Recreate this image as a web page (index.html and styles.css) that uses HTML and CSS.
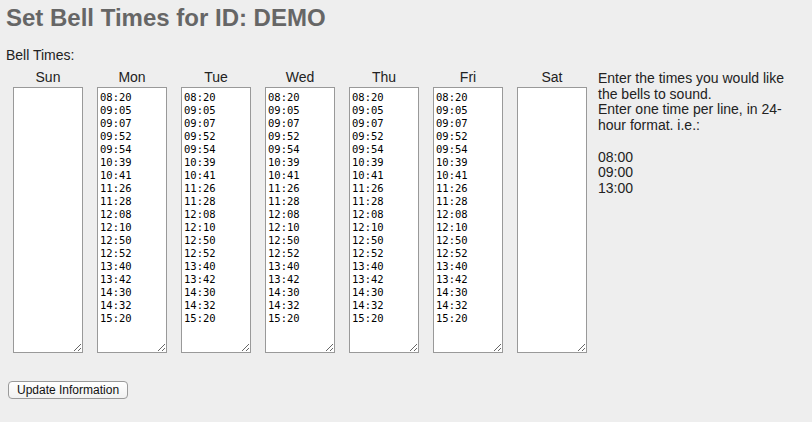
FILE: index.html
```html
<!DOCTYPE html>
<html lang="en">
<head>
    <meta charset="UTF-8">
    <title>Set Bell Times</title>
    <link rel="stylesheet" href="styles.css">
</head>
<body>
    <h1 class="page-title">Set Bell Times for ID: DEMO</h1>

    <form class="bell-form" onsubmit="return false;">
        <div class="field-label">Bell Times:</div>

        <div class="week">
            <div class="days">
                <div class="day">
                    <div class="day-name">Sun</div>
                    <textarea class="times" name="sun"></textarea>
                </div>
                <div class="day">
                    <div class="day-name">Mon</div>
                    <textarea class="times" name="mon">08:20
09:05
09:07
09:52
09:54
10:39
10:41
11:26
11:28
12:08
12:10
12:50
12:52
13:40
13:42
14:30
14:32
15:20</textarea>
                </div>
                <div class="day">
                    <div class="day-name">Tue</div>
                    <textarea class="times" name="tue">08:20
09:05
09:07
09:52
09:54
10:39
10:41
11:26
11:28
12:08
12:10
12:50
12:52
13:40
13:42
14:30
14:32
15:20</textarea>
                </div>
                <div class="day">
                    <div class="day-name">Wed</div>
                    <textarea class="times" name="wed">08:20
09:05
09:07
09:52
09:54
10:39
10:41
11:26
11:28
12:08
12:10
12:50
12:52
13:40
13:42
14:30
14:32
15:20</textarea>
                </div>
                <div class="day">
                    <div class="day-name">Thu</div>
                    <textarea class="times" name="thu">08:20
09:05
09:07
09:52
09:54
10:39
10:41
11:26
11:28
12:08
12:10
12:50
12:52
13:40
13:42
14:30
14:32
15:20</textarea>
                </div>
                <div class="day">
                    <div class="day-name">Fri</div>
                    <textarea class="times" name="fri">08:20
09:05
09:07
09:52
09:54
10:39
10:41
11:26
11:28
12:08
12:10
12:50
12:52
13:40
13:42
14:30
14:32
15:20</textarea>
                </div>
                <div class="day">
                    <div class="day-name">Sat</div>
                    <textarea class="times" name="sat"></textarea>
                </div>
            </div>

            <div class="help">
                Enter the times you would like the bells to sound.<br>
                Enter one time per line, in 24-hour format. i.e.:<br>
                <br>
                08:00<br>
                09:00<br>
                13:00
            </div>
        </div>

        <button type="submit" class="submit-btn">Update Information</button>
    </form>
</body>
</html>
```

FILE: styles.css
```css
* {
    box-sizing: border-box;
}

body {
    margin: 0;
    padding: 0 8px 0 6px;
    background: #eeeeee;
    color: #222;
    font-family: "Liberation Sans", Arial, sans-serif;
    font-size: 14px;
}

.page-title {
    margin: 4px 0 0;
    font-size: 24px;
    line-height: 28px;
    font-weight: bold;
    color: #666;
}

.field-label {
    margin-top: 15px;
    line-height: 16px;
}

.week {
    display: flex;
    gap: 11px;
    margin-top: 6px;
}

.days {
    display: flex;
    gap: 14px;
    margin-left: 7px;
}

.day {
    display: flex;
    flex-direction: column;
    width: 70px;
}

.day-name {
    text-align: center;
    line-height: 16px;
}

.times {
    display: block;
    width: 70px;
    height: 266px;
    margin: 2px 0 0;
    padding: 3px 2px;
    border: 1px solid #999;
    background: #fff;
    color: #000;
    font-family: "DejaVu Sans Mono", "Liberation Mono", monospace;
    font-size: 10.5px;
    line-height: 13px;
    outline: none;
}

.help {
    flex: 1;
    padding-top: 2px;
    line-height: 15.7px;
    color: #222;
}

.submit-btn {
    display: block;
    height: 18px;
    margin: 28px 0 0 2px;
    padding: 0 8px;
    border: 1px solid #9a9a9a;
    border-radius: 4px;
    background: linear-gradient(#ffffff, #f1f1f1);
    color: #111;
    font-family: "Liberation Sans", Arial, sans-serif;
    font-size: 12px;
    line-height: 16px;
}
```
